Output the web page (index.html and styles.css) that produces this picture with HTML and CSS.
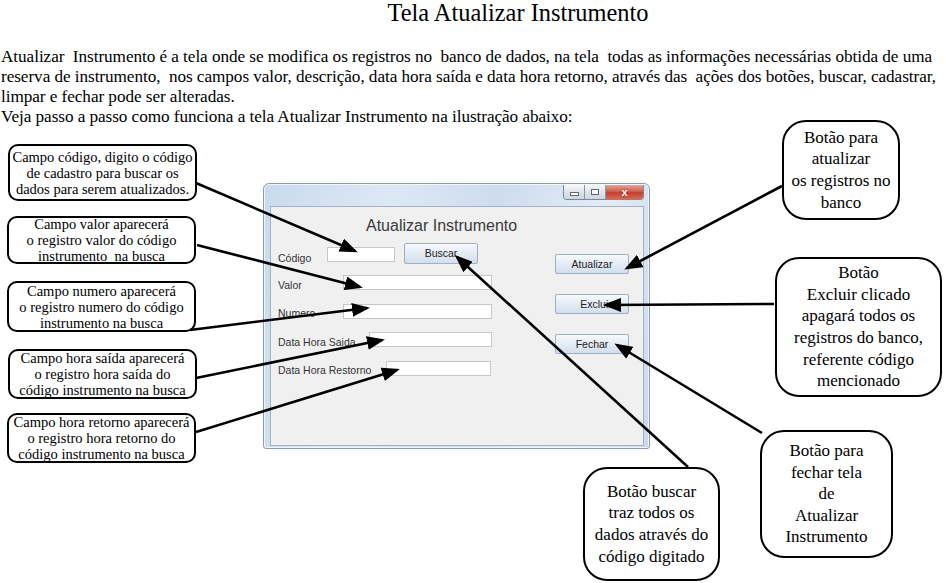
FILE: index.html
```html
<!DOCTYPE html>
<html lang="pt-BR">
<head>
    <meta charset="UTF-8">
    <title>Tela Atualizar Instrumento</title>
    <link rel="stylesheet" href="styles.css">
</head>
<body>
    <div id="page">
        <!-- titulo da pagina -->
        <h1 class="page-title">Tela Atualizar Instrumento</h1>

        <!-- texto de introducao -->
        <div class="intro">
            <div class="intro-line">Atualizar  Instrumento é a tela onde se modifica os registros no  banco de dados, na tela  todas as informações necessárias obtida de uma</div>
            <div class="intro-line">reserva de instrumento,  nos campos valor, descrição, data hora saída e data hora retorno, através das  ações dos botões, buscar, cadastrar,</div>
            <div class="intro-line">limpar e fechar pode ser alteradas.</div>
            <div class="intro-line">Veja passo a passo como funciona a tela Atualizar Instrumento na ilustração abaixo:</div>
        </div>

        <!-- ilustracao: janela + baloes explicativos -->
        <div id="diagram">
            <div class="note note-small note-codigo">Campo código, digito o código<br>de cadastro para buscar os<br>dados para serem atualizados.</div>
            <div class="note note-small note-valor">Campo valor aparecerá<br>o registro valor do código<br>instrumento&nbsp; na busca</div>
            <div class="note note-small note-numero">Campo numero aparecerá<br>o registro numero do código<br>instrumento na busca</div>
            <div class="note note-small note-saida">Campo hora saída aparecerá<br>o registro hora saída do<br>código instrumento na busca</div>
            <div class="note note-small note-retorno">Campo hora retorno aparecerá<br>o registro hora retorno do<br>código instrumento na busca</div>

            <div class="note note-big note-atualizar">Botão para<br>atualizar<br>os registros no<br>banco</div>
            <div class="note note-big note-excluir">Botão<br>Excluir clicado<br>apagará todos os<br>registros do banco,<br>referente código<br>mencionado</div>
            <div class="note note-big note-fechar">Botão para<br>fechar tela<br>de<br>Atualizar<br>Instrumento</div>
            <div class="note note-big note-buscar">Botão buscar<br>traz todos os<br>dados através do<br>código digitado</div>

            <!-- janela do sistema -->
            <div class="window">
                <div class="caption">
                    <div class="cap-btn cap-min"><span></span></div>
                    <div class="cap-btn cap-max"><span></span></div>
                    <div class="cap-btn cap-close">x</div>
                </div>
                <div class="client">
                    <div class="form">
                        <div class="form-title">Atualizar Instrumento</div>
                        <div class="row">
                            <span class="label label-codigo">Código</span>
                            <span class="field field-codigo"></span>
                            <span class="win-btn btn-buscar">Buscar</span>
                        </div>
                        <div class="row">
                            <span class="label label-valor">Valor</span>
                            <span class="field field-valor"></span>
                        </div>
                        <div class="row">
                            <span class="label label-numero">Numero</span>
                            <span class="field field-numero"></span>
                        </div>
                        <div class="row">
                            <span class="label label-saida">Data Hora Saida</span>
                            <span class="field field-saida"></span>
                        </div>
                        <div class="row">
                            <span class="label label-retorno">Data Hora Restorno</span>
                            <span class="field field-retorno"></span>
                        </div>
                    </div>
                    <div class="actions">
                        <span class="win-btn">Atualizar</span>
                        <span class="win-btn btn-excluir">Excluir</span>
                        <span class="win-btn">Fechar</span>
                    </div>
                </div>
            </div>

            <!-- setas -->
            <svg class="arrows" width="946" height="456" viewBox="0 0 946 456">
                <defs>
                    <marker id="head" markerUnits="userSpaceOnUse" markerWidth="18" markerHeight="14" refX="15" refY="7" orient="auto">
                        <path d="M0,0 L18,7 L0,14 Z" fill="#000"/>
                    </marker>
                </defs>
                <g stroke="#000" stroke-width="2.6" fill="none" marker-end="url(#head)">
                    <line x1="196" y1="56" x2="355" y2="124"/>
                    <line x1="197" y1="118" x2="360" y2="160"/>
                    <line x1="190" y1="203" x2="367" y2="181"/>
                    <line x1="196" y1="251" x2="382" y2="213"/>
                    <line x1="196" y1="305" x2="397" y2="243"/>
                    <line x1="688" y1="340" x2="457" y2="130"/>
                    <line x1="782" y1="59" x2="627" y2="141"/>
                    <line x1="774" y1="177" x2="606" y2="178"/>
                    <line x1="762" y1="306" x2="617" y2="218"/>
                </g>
            </svg>
        </div>
    </div>
</body>
</html>
```

FILE: styles.css
```css
/* pagina */
body {
    margin: 0;
    background: #fff;
    color: #000;
    font-family: "Liberation Serif", "Times New Roman", serif;
}
#page {
    width: 946px;
    height: 583px;
    overflow: hidden;
}
.page-title {
    margin: 0;
    padding-left: 90px;
    text-align: center;
    font-size: 24.4px;
    font-weight: normal;
    line-height: 26px;
}
.intro {
    margin-top: 21px;
    padding-left: 1px;
    font-size: 17.2px;
    letter-spacing: -0.06px;
    line-height: 20px;
}
.intro-line {
    white-space: pre;
}

/* area da ilustracao */
#diagram {
    position: relative;
    height: 456px;
}
.arrows {
    position: absolute;
    left: 0;
    top: 0;
    pointer-events: none;
}

/* baloes */
.note {
    position: absolute;
    box-sizing: border-box;
    border: 2.5px solid #000;
    background: #fff;
    display: flex;
    align-items: center;
    justify-content: center;
    text-align: center;
    white-space: nowrap;
}
.note-small {
    border-radius: 10px;
    font-size: 14.5px;
    line-height: 16px;
    width: 189px;
    height: 50px;
    left: 7px;
}
.note-big {
    border-radius: 24px;
    font-size: 17px;
    line-height: 21.6px;
}
.note-codigo { top: 17px; height: 57px; left: 8px; }
.note-valor { top: 89px; height: 48px; }
.note-numero { top: 154px; height: 51px; }
.note-saida { top: 222px; left: 8px; }
.note-retorno { top: 286px; }

.note-atualizar { left: 782px; top: -7px; width: 118px; height: 100px; }
.note-excluir { left: 775px; top: 130px; width: 167px; height: 140px; }
.note-fechar { left: 760px; top: 303px; width: 133px; height: 128px; }
.note-buscar { left: 583px; top: 340px; width: 137px; height: 114px; }

/* janela estilo windows 7 */
.window {
    position: absolute;
    left: 263px;
    top: 56px;
    width: 387px;
    height: 266px;
    box-sizing: border-box;
    border: 1px solid #8c9cb0;
    border-radius: 6px 6px 3px 3px;
    background: linear-gradient(100deg, #c9daee 0%, #dde8f5 30%, #cddcee 55%, #e3ecf7 80%, #cad9ec 100%);
    padding: 22px 5px 2px 6px;
    box-shadow: inset 0 0 0 1px rgba(255, 255, 255, 0.7);
}
.caption {
    position: absolute;
    right: 5px;
    top: 1px;
    display: flex;
    height: 14px;
    border: 1px solid #7e8896;
    border-top: none;
    border-radius: 0 0 4px 4px;
    overflow: hidden;
}
.cap-btn {
    width: 20px;
    display: flex;
    align-items: center;
    justify-content: center;
    background: linear-gradient(#f6f8fb, #dfe4ea 50%, #cfd6df);
    border-right: 1px solid #8b95a3;
}
.cap-min span {
    width: 7px;
    height: 2px;
    margin-top: 4px;
    border: 1px solid #5b6573;
    background: #fff;
}
.cap-max span {
    width: 6px;
    height: 4px;
    border: 1px solid #5b6573;
    background: #fff;
}
.cap-close {
    width: 37px;
    border-right: none;
    background: linear-gradient(#e8a596, #d0604d 45%, #c2402d 55%, #d66a50);
    color: #fff;
    font: bold 11px "Liberation Sans", Arial, sans-serif;
    line-height: 12px;
    text-shadow: 0 0 2px #7a2418;
}
.client {
    height: 100%;
    box-sizing: border-box;
    border: 1px solid #a3b1c2;
    background: #f0f0f0;
    display: flex;
    font-family: "Liberation Sans", Arial, sans-serif;
    color: #333;
}
.form {
    width: 284px;
    flex: none;
}
.form-title {
    margin: 8px 0 0 95px;
    font-size: 16px;
    line-height: 22px;
    color: #3a3a3a;
}
.form-title + .row {
    margin-top: 3px;
}
.row {
    display: flex;
    align-items: center;
    height: 28.5px;
    padding-left: 7px;
}
.label {
    flex: none;
    font-size: 10.5px;
    padding-top: 4px;
}
.label-codigo { width: 49px; padding-top: 8px; }
.label-valor { width: 65px; }
.label-numero { width: 65px; }
.label-saida { width: 91px; }
.label-retorno { width: 108px; }
.field {
    height: 15px;
    box-sizing: border-box;
    background: #fff;
    border: 1px solid #c4c8ce;
}
.field-codigo { width: 68px; }
.field-valor { width: 149px; }
.field-numero { width: 149px; }
.field-saida { width: 123px; }
.field-retorno { width: 105px; }

.win-btn {
    display: flex;
    align-items: center;
    justify-content: center;
    width: 74px;
    height: 20px;
    box-sizing: border-box;
    border: 1px solid #9fb0c4;
    border-radius: 2px;
    background: linear-gradient(#f7f9fc, #e4ebf4 50%, #d3dfec);
    font-size: 10.5px;
    color: #222;
}
.btn-buscar {
    margin-left: 9px;
    height: 21px;
    margin-top: -2px;
}
.btn-excluir {
    padding-left: 8px;
}
.actions {
    display: flex;
    flex-direction: column;
    gap: 20px;
    padding-top: 47px;
}
```
